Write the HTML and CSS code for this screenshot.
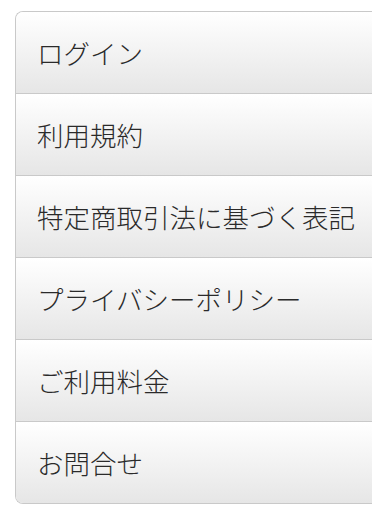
FILE: index.html
```html
<!DOCTYPE html>
<html lang="ja">

<head>
    <meta charset="UTF-8">
    <meta name="viewport" content="width=device-width, initial-scale=1.0">
    <title>メニュー</title>
    <link rel="stylesheet" href="styles.css">
</head>

<body>
<ul class="menu">
    <li class="item"><a href="#">ログイン</a></li>
    <li class="item"><a href="#">利用規約</a></li>
    <li class="item"><a href="#">特定商取引法に基づく表記</a></li>
    <li class="item"><a href="#">プライバシーポリシー</a></li>
    <li class="item"><a href="#">ご利用料金</a></li>
    <li class="item"><a href="#">お問合せ</a></li>
</ul>
</body>

</html>
```

FILE: styles.css
```css
body,
html {
    padding: 0;
    margin: 0;
    background-color: #ffffff;
    overflow: hidden;
}

.menu {
    list-style: none;
    padding: 0;
    margin: 11px 0 0 15px;
    border: 1px solid #c9c9c9;
    border-right: none;
    border-radius: 8px 0 0 8px;
    overflow: hidden;
    font-family: "Noto Sans CJK JP", "Noto Sans", sans-serif;
}

.item {
    height: 81px;
    border-bottom: 1px solid #c9c9c9;
    background: linear-gradient(#ffffff, #e6e6e6);
}

.item:last-child {
    border-bottom: none;
}

.item a {
    display: flex;
    align-items: center;
    height: 100%;
    padding-left: 21px;
    font-size: 26.5px;
    font-weight: 300;
    color: #2a2a2a;
    text-decoration: none;
    white-space: nowrap;
}
```
